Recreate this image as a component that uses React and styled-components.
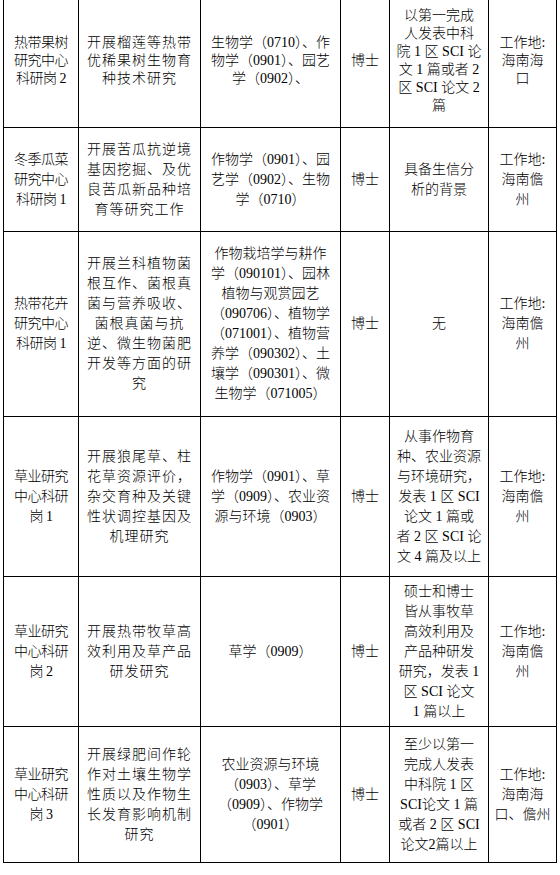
import React from "react"
import styled, { createGlobalStyle } from "styled-components"

const GlobalStyle = createGlobalStyle`
  html, body {
    margin: 0;
    padding: 0;
    background: #fff;
  }
  body {
    font-family: "Liberation Serif", "Noto Sans CJK SC", serif;
    color: #000;
  }
`

const Page = styled.div`
  width: 560px;
  height: 875px;
  overflow: hidden;
  background: #fff;
`

const Table = styled.table`
  border-collapse: collapse;
  table-layout: fixed;
  width: 553px;
  margin: -7px 0 0 3px;
`

const Row = styled.tr`
  height: ${props => props.h}px;
  line-height: ${props => props.lh || 20}px;
`

const Cell = styled.td`
  border: 1px solid #000;
  padding: 0;
  text-align: center;
  vertical-align: middle;
  font-size: 14px;
  font-weight: 300;
  white-space: nowrap;
  letter-spacing: ${props => props.ls || 0}px;
`

const Line = styled.div`
  display: block;
`

const widths = [75, 122, 140, 49, 99, 68]

const rows = [
  {
    h: 134,
    lh: 18,
    cells: [
      ["热带果树", "研究中心", "科研岗 2"],
      ["开展榴莲等热带", "优稀果树生物育", "种技术研究"],
      ["生物学（0710）、作", "物学（0901）、园艺", "学（0902）、"],
      ["博士"],
      ["以第一完成", "人发表中科", "院 1 区 SCI 论", "文 1 篇或者 2", "区 SCI 论文 2", "篇"],
      ["工作地:", "海南海", "口"],
    ],
  },
  {
    h: 104,
    cells: [
      ["冬季瓜菜", "研究中心", "科研岗 1"],
      ["开展苦瓜抗逆境", "基因挖掘、及优", "良苦瓜新品种培", "育等研究工作"],
      ["作物学（0901）、园", "艺学（0902）、生物", "学（0710）"],
      ["博士"],
      ["具备生信分", "析的背景"],
      ["工作地:", "海南儋", "州"],
    ],
  },
  {
    h: 185,
    cells: [
      ["热带花卉", "研究中心", "科研岗 1"],
      ["开展兰科植物菌", "根互作、菌根真", "菌与营养吸收、", "菌根真菌与抗", "逆、微生物菌肥", "开发等方面的研", "究"],
      ["作物栽培学与耕作", "学（090101）、园林", "植物与观赏园艺", "（090706）、植物学", "（071001）、植物营", "养学（090302）、土", "壤学（090301）、微", "生物学（071005）"],
      ["博士"],
      ["无"],
      ["工作地:", "海南儋", "州"],
    ],
  },
  {
    h: 160,
    cells: [
      ["草业研究", "中心科研", "岗 1"],
      ["开展狼尾草、柱", "花草资源评价，", "杂交育种及关键", "性状调控基因及", "机理研究"],
      ["作物学（0901）、草", "学（0909）、农业资", "源与环境（0903）"],
      ["博士"],
      ["从事作物育", "种、农业资源", "与环境研究，", "发表 1 区 SCI", "论文 1 篇或", "者 2 区 SCI 论", "文 4 篇及以上"],
      ["工作地:", "海南儋", "州"],
    ],
  },
  {
    h: 150,
    cells: [
      ["草业研究", "中心科研", "岗 2"],
      ["开展热带牧草高", "效利用及草产品", "研发研究"],
      ["草学（0909）"],
      ["博士"],
      ["硕士和博士", "皆从事牧草", "高效利用及", "产品种研发", "研究，发表 1", "区 SCI 论文", "1 篇以上"],
      ["工作地:", "海南儋", "州"],
    ],
  },
  {
    h: 136,
    cells: [
      ["草业研究", "中心科研", "岗 3"],
      ["开展绿肥间作轮", "作对土壤生物学", "性质以及作物生", "长发育影响机制", "研究"],
      ["农业资源与环境", "（0903）、草学", "（0909）、作物学", "（0901）"],
      ["博士"],
      ["至少以第一", "完成人发表", "中科院 1 区", "SCI论文 1 篇", "或者 2 区 SCI", "论文2篇以上"],
      ["工作地:", "海南海", "口、儋州"],
    ],
  },
]

const spacing = [-0.5, 1, 0, 0, 0, 0]

const App = () => (
  <Page>
    <GlobalStyle />
    <Table>
      <colgroup>
        {widths.map((w, i) => (
          <col key={i} style={{ width: w }} />
        ))}
      </colgroup>
      <tbody>
        {rows.map((row, r) => (
          <Row key={r} h={row.h} lh={row.lh}>
            {row.cells.map((lines, c) => (
              <Cell key={c} ls={spacing[c]}>
                {lines.map((t, k) => (
                  <Line key={k}>{t}</Line>
                ))}
              </Cell>
            ))}
          </Row>
        ))}
      </tbody>
    </Table>
  </Page>
)

export default App
